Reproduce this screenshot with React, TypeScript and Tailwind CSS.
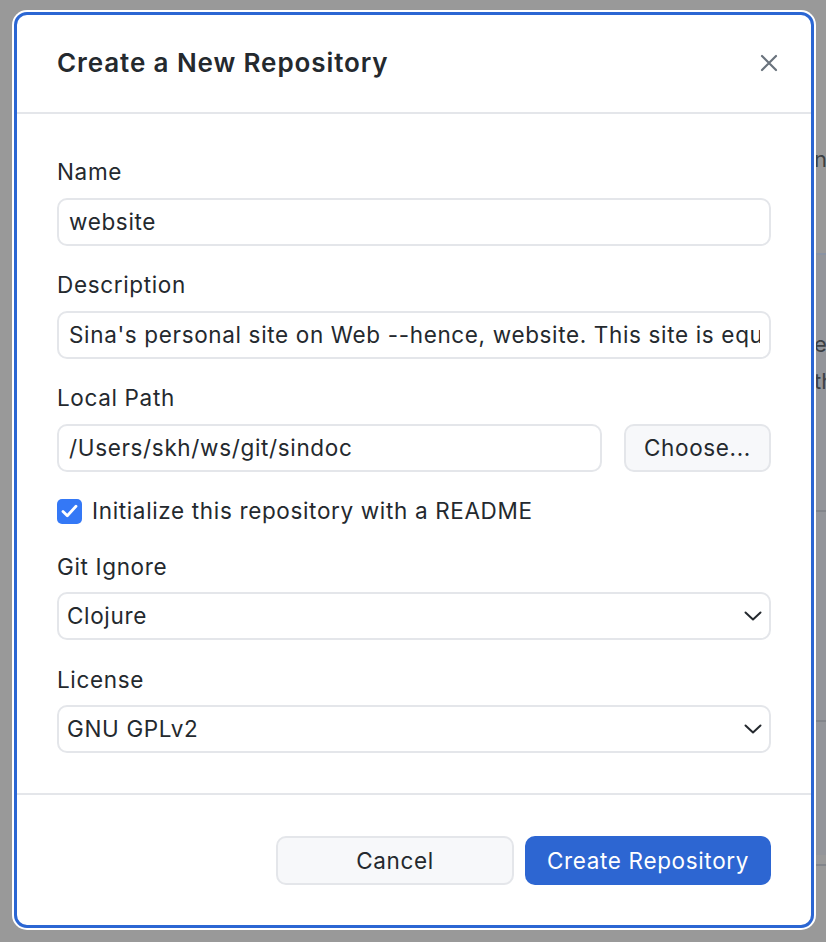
import React from "react";

const font = { fontFamily: "Inter, 'Noto Sans', 'Liberation Sans', sans-serif" };

function Chevron() {
  return (
    <svg width="18" height="10" viewBox="0 0 18 10" fill="none">
      <path d="M1.5 1.5 L9 8.5 L16.5 1.5" stroke="#24292e" strokeWidth="2" strokeLinecap="round" strokeLinejoin="round" />
    </svg>
  );
}

function Label({ children, className = "" }: { children: React.ReactNode; className?: string }) {
  return <div className={"h-[28px] leading-[28px] text-[22.5px] tracking-[0.65px] text-[#24292e] " + className}>{children}</div>;
}

export default function App() {
  return (
    <div className="relative w-[826px] h-[942px] bg-[#999999] overflow-hidden" style={font}>
      {/* background app peeking on the right */}
      <div className="absolute left-[814px] top-[145px] text-[22px] leading-[28px] text-[#24292e]/80">n</div>
      <div className="absolute left-[814px] top-[253px] w-[20px] h-[2px] bg-[#8a93a3]" />
      <div className="absolute left-[814px] top-[255px] w-[20px] h-[600px] bg-[#93959a]" />
      <div className="absolute left-[814px] top-[330px] text-[22px] leading-[28px] text-[#24292e]/80">e.</div>
      <div className="absolute left-[814px] top-[367px] text-[22px] leading-[28px] text-[#24292e]/80">th</div>
      <div className="absolute left-[814px] top-[510px] w-[20px] h-[2px] bg-[#82858b]" />
      <div className="absolute left-[814px] top-[720px] w-[20px] h-[2px] bg-[#82858b]" />
      <div className="absolute left-[814px] top-[864px] w-[20px] h-[2px] bg-[#82858b]" />

      {/* dialog */}
      <div className="absolute left-[14px] top-[12px] w-[800px] h-[916px] bg-white rounded-[13px] border-[3px] border-[#2b66d3] shadow-[0_0_0_2px_#ffffff] flex flex-col overflow-hidden">
        {/* header */}
        <div className="h-[99px] shrink-0 border-b-2 border-[#e4e6ea] flex items-center justify-between pl-10 pr-[33px] pb-[2px]">
          <div className="text-[26px] font-semibold text-[#24292e] tracking-[0.9px]">Create a New Repository</div>
          <svg width="18" height="18" viewBox="0 0 18 18" fill="none">
            <path d="M2 2 L16 16 M16 2 L2 16" stroke="#6a737d" strokeWidth="2.2" strokeLinecap="round" />
          </svg>
        </div>

        {/* body */}
        <div className="flex-1 px-10 pt-[44px] flex flex-col text-[22.5px] tracking-[0.65px]">
          <Label>Name</Label>
          <div className="mt-3 h-[48px] rounded-[10px] border-2 border-[#e4e6ea] flex items-center px-[10px] text-[#24292e]">
            website
          </div>

          <Label className="mt-[25px]">Description</Label>
          <div className="mt-3 h-[48px] rounded-[10px] border-2 border-[#e4e6ea] flex items-center pl-[10px] pr-[9px] text-[#24292e]">
            <div className="flex-1 overflow-hidden whitespace-nowrap">
              Sina's personal site on Web --hence, website. This site is equally a blog and a notebook.
            </div>
          </div>

          <Label className="mt-[25px]">Local Path</Label>
          <div className="mt-3 flex gap-[22px]">
            <div className="flex-1 h-[48px] rounded-[10px] border-2 border-[#e4e6ea] flex items-center px-[10px] text-[#24292e]">
              /Users/skh/ws/git/sindoc
            </div>
            <div className="w-[147px] h-[48px] rounded-[10px] border-2 border-[#e4e6ea] bg-[#f7f8fa] flex items-center justify-center text-[#24292e]">
              Choose...
            </div>
          </div>

          <div className="mt-[25px] h-[28px] flex items-center gap-[10px]">
            <div className="w-[25px] h-[25px] rounded-[5px] bg-[#3478f6] flex items-center justify-center">
              <svg width="17" height="14" viewBox="0 0 17 14" fill="none">
                <path d="M2 7.5 L6.3 11.8 L15 2.2" stroke="#ffffff" strokeWidth="2.8" strokeLinecap="round" strokeLinejoin="round" />
              </svg>
            </div>
            <div className="text-[#24292e]">Initialize this repository with a README</div>
          </div>

          <Label className="mt-[28px]">Git Ignore</Label>
          <div className="mt-[11px] h-[48px] rounded-[10px] border-2 border-[#e4e6ea] flex items-center justify-between pl-[8px] pr-[7px] text-[#24292e]">
            <span>Clojure</span>
            <Chevron />
          </div>

          <Label className="mt-[26px]">License</Label>
          <div className="mt-[11px] h-[48px] rounded-[10px] border-2 border-[#e4e6ea] flex items-center justify-between pl-[8px] pr-[7px] text-[#24292e]">
            <span>GNU GPLv2</span>
            <Chevron />
          </div>
        </div>

        {/* footer */}
        <div className="h-[132px] shrink-0 border-t-2 border-[#e4e6ea] flex items-start justify-end gap-[11px] px-10 pt-[41px] text-[22.5px] tracking-[0.65px]">
          <div className="w-[238px] h-[49px] rounded-[10px] border-2 border-[#e4e6ea] bg-[#f7f8fa] flex items-center justify-center text-[#24292e]">
            Cancel
          </div>
          <div className="w-[246px] h-[49px] rounded-[10px] bg-[#2d66d2] flex items-center justify-center text-white">
            Create Repository
          </div>
        </div>
      </div>
    </div>
  );
}
